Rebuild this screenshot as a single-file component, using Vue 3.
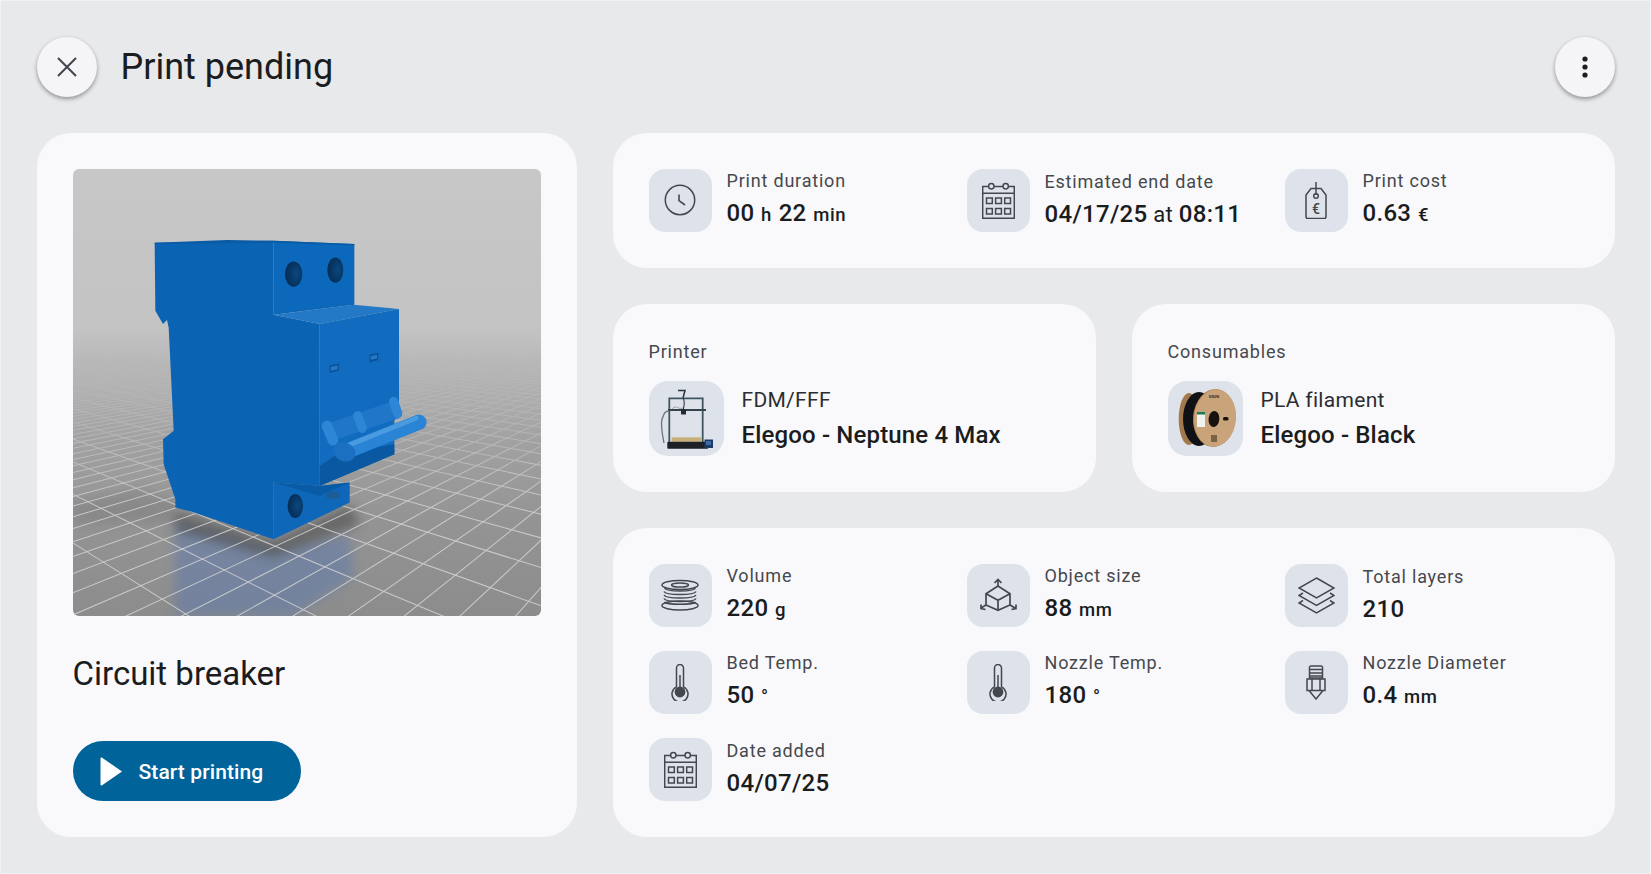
<template>
  <div class="page">
    <header class="top-bar">
      <button class="round-btn" type="button" aria-label="Close">
        <svg width="22" height="22" viewBox="0 0 22 22" fill="none" stroke="#44474e" stroke-width="2.1">
          <path d="M2 2l18 18M20 2L2 20" />
        </svg>
      </button>
      <h1 class="page-title">Print pending</h1>
      <button class="round-btn menu-btn" type="button" aria-label="More">
        <svg width="6" height="22" viewBox="0 0 6 22" fill="#1d1f23">
          <circle cx="3" cy="3" r="2.6" />
          <circle cx="3" cy="11" r="2.6" />
          <circle cx="3" cy="19" r="2.6" />
        </svg>
      </button>
    </header>

    <main class="layout">
      <section class="card model-card">
        <svg class="preview" viewBox="38 25 1404 1340" preserveAspectRatio="none">
          <defs>
            <linearGradient id="floor" x1="0" y1="0" x2="0" y2="1">
              <stop offset="0" stop-color="#c7c7c7" />
              <stop offset="0.36" stop-color="#c3c3c3" />
              <stop offset="0.47" stop-color="#b2b2b2" />
              <stop offset="0.6" stop-color="#a2a2a2" />
              <stop offset="0.78" stop-color="#949494" />
              <stop offset="1" stop-color="#8c8c8c" />
            </linearGradient>
            <linearGradient id="grid-fade" x1="0" y1="0" x2="0" y2="1">
              <stop offset="0.42" stop-color="#000" />
              <stop offset="0.6" stop-color="#666" />
              <stop offset="0.76" stop-color="#ddd" />
            </linearGradient>
            <mask id="grid-mask" maskUnits="userSpaceOnUse" x="38" y="25" width="1404" height="1340">
              <rect x="38" y="25" width="1404" height="1340" fill="url(#grid-fade)" />
            </mask>
            <filter id="blur-lg" x="-30%" y="-30%" width="160%" height="160%">
              <feGaussianBlur stdDeviation="16" />
            </filter>
            <filter id="blur-sm" x="-10%" y="-10%" width="120%" height="120%">
              <feGaussianBlur stdDeviation="2" />
            </filter>
            <radialGradient id="hole" cx="0.65" cy="0.5" r="0.7">
              <stop offset="0" stop-color="#0a4880" />
              <stop offset="1" stop-color="#05294d" />
            </radialGradient>
          </defs>

          <rect x="38" y="25" width="1404" height="1340" fill="url(#floor)" />

          <!-- floor shadows and reflection, under the grid -->
          <path d="M38 1020L240 985 345 1020 345 1080 38 1090z" fill="#5f5f5f" opacity=".22" filter="url(#blur-lg)" />
          <path d="M345 1085L640 1165 865 1120 880 1250 700 1365 345 1365z" fill="#5b79ad" opacity=".5" filter="url(#blur-lg)" />
          <path d="M345 1050L640 1140 870 1030 900 1090 640 1190 345 1110z" fill="#3d3d3d" opacity=".5" filter="url(#blur-lg)" />

          <g mask="url(#grid-mask)" stroke="#d4d4d4" stroke-width="3">
            <line
              v-for="(l, i) in gridLines"
              :key="i"
              :x1="l.x1"
              :y1="l.y1"
              :x2="l.x2"
              :y2="l.y2"
            />
          </g>

          <!-- circuit breaker body -->
          <path
            d="M283 246L640 240 640 462 778 490 778 975 640 965 640 1135 392 1052 345 1040 345 1015 310 910 308 835 340 810 325 500 320 478 308 490 285 450z"
            fill="#0b63b3"
          />
          <path d="M640 240L882 250 882 432 640 462z" fill="#0c68ba" />
          <path d="M283 246L500 238 640 240 882 250 882 254 640 246 283 250z" fill="#0a5ba6" />
          <ellipse cx="700" cy="340" rx="26" ry="38" fill="url(#hole)" />
          <ellipse cx="825" cy="328" rx="24" ry="38" fill="url(#hole)" />
          <path d="M640 462L880 432 1016 445 778 490z" fill="#2479c6" />
          <path d="M778 490L1016 445 1016 760 1002 780 1002 880 778 975z" fill="#116cc0" />
          <path d="M808 614l28-6v22l-28 6z" fill="#0a539a" />
          <path d="M812 618l20-4v11l-20 5z" fill="#2479c6" />
          <path d="M927 582l27-6v22l-27 6z" fill="#0a539a" />
          <path d="M931 586l19-4v11l-19 4z" fill="#2479c6" />
          <path d="M640 965L778 975 868 965 868 1025 640 1135z" fill="#0e67b8" />
          <path d="M640 965L778 1005 868 965 778 975z" fill="#0a5ba6" />
          <ellipse cx="705" cy="1035" rx="23" ry="36" fill="url(#hole)" />
          <ellipse cx="818" cy="1003" rx="22" ry="12" fill="#1d5d97" />

          <!-- toggle -->
          <path d="M778 915L830 880 1002 850 1002 880 778 975z" fill="#0a58a2" />
          <g fill="none" stroke-linecap="round">
            <path d="M806 815L1010 745" stroke="#2076c8" stroke-width="54" stroke-linecap="butt" />
            <path d="M800 795L818 838" stroke="#2d86d6" stroke-width="32" />
            <path d="M892 765L906 802" stroke="#2d86d6" stroke-width="28" />
            <path d="M1000 722L1012 758" stroke="#2d86d6" stroke-width="28" />
            <path d="M856 872L1076 784" stroke="#2a84d6" stroke-width="46" />
            <path d="M862 854L1068 772" stroke="#4a9ae0" stroke-width="14" />
          </g>
          <ellipse cx="852" cy="873" rx="34" ry="28" transform="rotate(25 852 873)" fill="#1b70c2" filter="url(#blur-sm)" />
        </svg>

        <h2 class="model-name">Circuit breaker</h2>

        <button class="start-btn" type="button">
          <svg width="23" height="29" viewBox="0 0 23 29" fill="#fff">
            <path d="M0.5 1.5a1 1 0 0 1 1.6-.8L22 14.5 2.100 28.300a1 1 0 0 1-1.600-.8z" />
          </svg>
          <span>Start printing</span>
        </button>
      </section>

      <div class="details">
        <section class="card stats">
          <div v-for="stat in summaryStats" :key="stat.label" class="stat">
            <span class="icon-box">
              <svg
                :width="icons[stat.icon].w"
                :height="icons[stat.icon].h"
                :viewBox="`0 0 ${icons[stat.icon].w} ${icons[stat.icon].h}`"
                fill="none"
                stroke="#44474e"
                stroke-width="1.5"
                v-html="icons[stat.icon].body"
              ></svg>
            </span>
            <div class="stat-text">
              <span class="stat-label">{{ stat.label }}</span>
              <span class="stat-value">
                <span v-for="(part, i) in stat.value" :key="i" :class="part[1]">{{ part[0] }}</span>
              </span>
            </div>
          </div>
        </section>

        <div class="equipment">
          <section class="card equip-card">
            <h3 class="equip-title">Printer</h3>
            <div class="equip-row">
              <span class="thumb">
                <svg width="75" height="75" viewBox="0 0 75 75" fill="none">
                  <path d="M29 9.500h7l-2 7.500" stroke="#2b3238" stroke-width="1.500" />
                  <path d="M20.300 62V17.300h33.400V62" stroke="#3f5560" stroke-width="1.800" />
                  <path d="M19 29h38" stroke="#35434c" stroke-width="1.800" />
                  <path d="M34.500 17c1 4 1 8-.5 12" stroke="#20262b" stroke-width="1" />
                  <rect x="32" y="28" width="5" height="5.500" fill="#252b30" />
                  <path d="M20 30c-5 0-5 4-7 8-1 4 0 14 2 24" stroke="#6d7478" stroke-width="1.300" />
                  <path d="M23 28c5-5 6 1 11-1" stroke="#8a9094" stroke-width=".8" />
                  <rect x="22.700" y="56.300" width="30" height="4.600" fill="#c9af7c" />
                  <rect x="18.300" y="60.800" width="41" height="7" rx="1" fill="#1d2126" />
                  <rect x="55.500" y="58.500" width="8.500" height="8.500" fill="#1d3a63" />
                  <rect x="57" y="60" width="5" height="4" fill="#3d6ba8" />
                </svg>
              </span>
              <div class="equip-text">
                <span class="equip-kind">FDM/FFF</span>
                <span class="equip-name">Elegoo - Neptune 4 Max</span>
              </div>
            </div>
          </section>

          <section class="card equip-card">
            <h3 class="equip-title">Consumables</h3>
            <div class="equip-row">
              <span class="thumb">
                <svg width="75" height="75" viewBox="0 0 75 75">
                  <ellipse cx="21" cy="38" rx="10.300" ry="26" fill="#a47a4d" />
                  <ellipse cx="31" cy="38" rx="16" ry="27" fill="#101114" />
                  <g transform="rotate(5 47 37)">
                    <ellipse cx="46.300" cy="37" rx="21.300" ry="29" fill="#a57c50" />
                    <ellipse cx="47" cy="37" rx="21" ry="28.700" fill="#c9a379" />
                    <ellipse cx="46" cy="38" rx="5.400" ry="8" fill="#17120e" />
                  </g>
                  <rect x="55" y="36" width="5.500" height="3.500" rx="1.500" fill="#17120e" />
                  <rect x="29" y="31" width="8" height="15" fill="#f2f2ee" />
                  <rect x="29" y="31" width="8" height="2.500" fill="#1e7a52" />
                  <rect x="43" y="54" width="6" height="7" fill="#7c6245" />
                  <text x="46" y="17" text-anchor="middle" class="brand">ESUN</text>
                </svg>
              </span>
              <div class="equip-text">
                <span class="equip-kind">PLA filament</span>
                <span class="equip-name">Elegoo - Black</span>
              </div>
            </div>
          </section>
        </div>

        <section class="card stats">
          <div v-for="stat in modelStats" :key="stat.label" class="stat">
            <span class="icon-box">
              <svg
                :width="icons[stat.icon].w"
                :height="icons[stat.icon].h"
                :viewBox="`0 0 ${icons[stat.icon].w} ${icons[stat.icon].h}`"
                fill="none"
                stroke="#44474e"
                stroke-width="1.5"
                v-html="icons[stat.icon].body"
              ></svg>
            </span>
            <div class="stat-text">
              <span class="stat-label">{{ stat.label }}</span>
              <span class="stat-value">
                <span v-for="(part, i) in stat.value" :key="i" :class="part[1]">{{ part[0] }}</span>
              </span>
            </div>
          </div>
        </section>
      </div>
    </main>
  </div>
</template>

<script setup>
// perspective floor grid of the model preview, in the svg's own units
const vpLeft = [-1100, 430]
const vpRight = [2200, 430]
const origin = [1290, 1280]
const kLeft = 0.046
const kRight = 0.105

function project(u, v) {
  const a = u * kLeft
  const b = v * kRight
  const w = 1 + a + b
  return [
    (origin[0] + a * vpLeft[0] + b * vpRight[0]) / w,
    (origin[1] + a * vpLeft[1] + b * vpRight[1]) / w,
  ]
}

function buildGrid() {
  const lines = []
  for (let v = -8; v <= 40; v++) {
    const from = project((0.02 - 1 - v * kRight) / kLeft, v)
    const to = project(2000, v)
    lines.push({ x1: from[0], y1: from[1], x2: to[0], y2: to[1] })
  }
  for (let u = -20; u <= 90; u++) {
    const from = project(u, (0.02 - 1 - u * kLeft) / kRight)
    const to = project(u, 2000)
    lines.push({ x1: from[0], y1: from[1], x2: to[0], y2: to[1] })
  }
  return lines
}

const gridLines = buildGrid()

const calendar = {
  w: 33,
  h: 37,
  body: `<path d="M6.600 4.500H.7v31.800h31.600V4.500h-5.900M12 4.500h9M.7 11.300h31.600"/>
    <circle cx="9.300" cy="4.300" r="2.700"/><circle cx="23.700" cy="4.300" r="2.700"/>
    <path d="M4.500 16h5.800v5.500H4.500zM13.600 16h5.800v5.500h-5.800zM22.700 16h5.800v5.500h-5.800zM4.500 26.500h5.800V32H4.500zM13.600 26.500h5.800V32h-5.800zM22.700 26.500h5.800V32h-5.800z"/>`,
}

const thermometer = {
  w: 18,
  h: 37,
  body: `<path d="M5.500 22.800V4a3.500 3.500 0 0 1 7 0v18.800a8 8 0 1 1-7 0z"/>
    <path d="M9 11v14"/><circle cx="9" cy="28" r="5.400" fill="#44474e" stroke="none"/>`,
}

const icons = {
  clock: {
    w: 32,
    h: 32,
    body: `<circle cx="16" cy="16" r="14.700"/><path d="M15 10.500v6.200l6 4.300" stroke-width="1.600"/>`,
  },
  calendar,
  tag: {
    w: 22,
    h: 37,
    body: `<path d="M11 0v13"/><circle cx="11" cy="14" r="2.300"/>
      <path d="M6 6.500h10l5 6.500v21.600a2 2 0 0 1-2 2H3a2 2 0 0 1-2-2V13z"/>
      <text x="11" y="31.500" text-anchor="middle" font-family="Roboto, sans-serif" font-size="14" font-weight="500" fill="#44474e" stroke="none">€</text>`,
  },
  spool: {
    w: 38,
    h: 32,
    body: `<ellipse cx="19" cy="6" rx="18" ry="4.500"/><ellipse cx="19" cy="6" rx="8.500" ry="2.100"/>
      <path d="M3.500 9c2 4 29 4 31 0M3 12.500c2 4 30 4 32 0M3 16c2 4 30 4 32 0M3 19.500c2 4 30 4 32 0M3.500 23c2 3 29 3 31 0"/>
      <ellipse cx="19" cy="26.500" rx="18" ry="4.500"/>`,
  },
  cube: {
    w: 37,
    h: 34,
    body: `<path d="M18 8L6 15.700v11.300l12 5.300 12-5.300V15.700zM6 15.700l12 6.600 12-6.600M18 22.300v10" stroke-width="1.700"/>
      <path d="M18 8V1.500M14.500 5L18 1.500 21.500 5M6 27l-5 3M1 26.500V30.500l4.500 1M30 27l5 3M36 26.500V30.500l-4.500 1" stroke-width="1.700"/>`,
  },
  layers: {
    w: 37,
    h: 37,
    body: `<path d="M18.500 1L36 11 18.500 21 1 11zM5 16l-4 2.500 17.500 10 17.500-10L32 16M5 23.500l-4 2.500 17.500 10L36 26l-4-2.500"/>`,
  },
  thermometer,
  nozzle: {
    w: 20,
    h: 35,
    body: `<path d="M3.500 2a1.500 1.500 0 0 1 1.500-1h10a1.500 1.500 0 0 1 1.500 1v11h-13zM3.500 4.500h13M3.500 8h13M3.500 11h13"/>
      <path d="M1 14h18v11.500H1zM6 14v11.500M14 14v11.500M3 25.500L10 34l7-8.500"/>`,
  },
}

const summaryStats = [
  {
    label: 'Print duration',
    icon: 'clock',
    value: [['00'], [' h ', 'unit'], ['22'], [' min', 'unit']],
  },
  {
    label: 'Estimated end date',
    icon: 'calendar',
    value: [['04/17/25'], [' at ', 'soft'], ['08:11']],
  },
  {
    label: 'Print cost',
    icon: 'tag',
    value: [['0.63'], [' €', 'unit']],
  },
]

const modelStats = [
  { label: 'Volume', icon: 'spool', value: [['220'], [' g', 'unit']] },
  { label: 'Object size', icon: 'cube', value: [['88'], [' mm', 'unit']] },
  { label: 'Total layers', icon: 'layers', value: [['210']] },
  { label: 'Bed Temp.', icon: 'thermometer', value: [['50'], [' °', 'unit']] },
  { label: 'Nozzle Temp.', icon: 'thermometer', value: [['180'], [' °', 'unit']] },
  { label: 'Nozzle Diameter', icon: 'nozzle', value: [['0.4'], [' mm', 'unit']] },
  { label: 'Date added', icon: 'calendar', value: [['04/07/25']] },
]
</script>

<style scoped>
.page {
  box-sizing: border-box;
  min-height: 874px;
  padding: 35.5px;
  border: 1px solid #f1f2f3;
  background: #e8e9eb;
  font-family: Roboto, "Noto Sans", sans-serif;
  color: #1a1c1e;
}

.top-bar {
  display: flex;
  align-items: center;
  gap: 24px;
  height: 60px;
  margin-bottom: 36px;
}

.round-btn {
  display: flex;
  align-items: center;
  justify-content: center;
  width: 60px;
  height: 60px;
  padding: 0;
  border: none;
  border-radius: 50%;
  background: #f5f5f7;
  box-shadow: 0 2px 4px rgba(0, 0, 0, 0.38);
}

.menu-btn {
  margin-left: auto;
}

.page-title {
  margin: 0;
  font-size: 36px;
  font-weight: 400;
  line-height: 44px;
}

.layout {
  display: grid;
  grid-template-columns: 540px 1fr;
  gap: 36px;
}

.card {
  box-sizing: border-box;
  padding: 36px;
  border-radius: 34px;
  background: #f9f9fb;
}

.model-card {
  display: flex;
  flex-direction: column;
  align-items: flex-start;
}

.preview {
  display: block;
  width: 468px;
  height: 447px;
  border-radius: 6px;
}

.model-name {
  margin: 36px 0 0;
  font-size: 33px;
  font-weight: 400;
  line-height: 44px;
}

.start-btn {
  display: flex;
  align-items: center;
  gap: 16px;
  width: 228px;
  height: 60px;
  margin-top: auto;
  padding: 2px 0 0 27px;
  border: none;
  border-radius: 30px;
  background: #00639a;
  color: #fff;
  font-family: inherit;
  font-size: 21px;
  font-weight: 500;
  letter-spacing: 0.1px;
}

.details {
  display: flex;
  flex-direction: column;
  gap: 36px;
}

.stats {
  display: grid;
  grid-template-columns: repeat(3, 1fr);
  gap: 24px;
}

.stat {
  display: flex;
  align-items: center;
  gap: 15px;
}

.icon-box {
  display: flex;
  flex: none;
  align-items: center;
  justify-content: center;
  width: 63px;
  height: 63px;
  border-radius: 16px;
  background: #dee3eb;
}

.stat-text {
  display: flex;
  flex-direction: column;
  gap: 6px;
}

.stat-label {
  color: #46484d;
  font-size: 18px;
  letter-spacing: 0.8px;
  line-height: 22px;
}

.stat-value {
  font-size: 24px;
  font-weight: 500;
  letter-spacing: 0.3px;
  line-height: 30px;
  white-space: pre;
}

.unit {
  font-size: 18.500px;
  letter-spacing: 0.6px;
  word-spacing: 1.500px;
}

.soft {
  font-size: 22px;
  font-weight: 400;
}

.equipment {
  display: grid;
  grid-template-columns: 1fr 1fr;
  gap: 36px;
}

.equip-title {
  margin: 0 0 18px;
  color: #46484d;
  font-size: 18px;
  font-weight: 400;
  letter-spacing: 0.8px;
  line-height: 23px;
}

.equip-row {
  display: flex;
  align-items: center;
  gap: 18px;
}

.thumb {
  flex: none;
  width: 75px;
  height: 75px;
  border-radius: 19px;
  background: #dee3eb;
  overflow: hidden;
}

.thumb svg {
  display: block;
}

.brand {
  font-family: Roboto, sans-serif;
  font-size: 4px;
  font-weight: 700;
  fill: #3a2c1d;
}

.equip-text {
  display: flex;
  flex-direction: column;
  gap: 7px;
}

.equip-kind {
  font-size: 21px;
  letter-spacing: 0.3px;
  line-height: 26px;
  color: #2b2d31;
}

.equip-name {
  font-size: 24px;
  font-weight: 500;
  letter-spacing: 0.15px;
  line-height: 30px;
}
</style>

<style>
body {
  background: #e8e9eb;
}
</style>
